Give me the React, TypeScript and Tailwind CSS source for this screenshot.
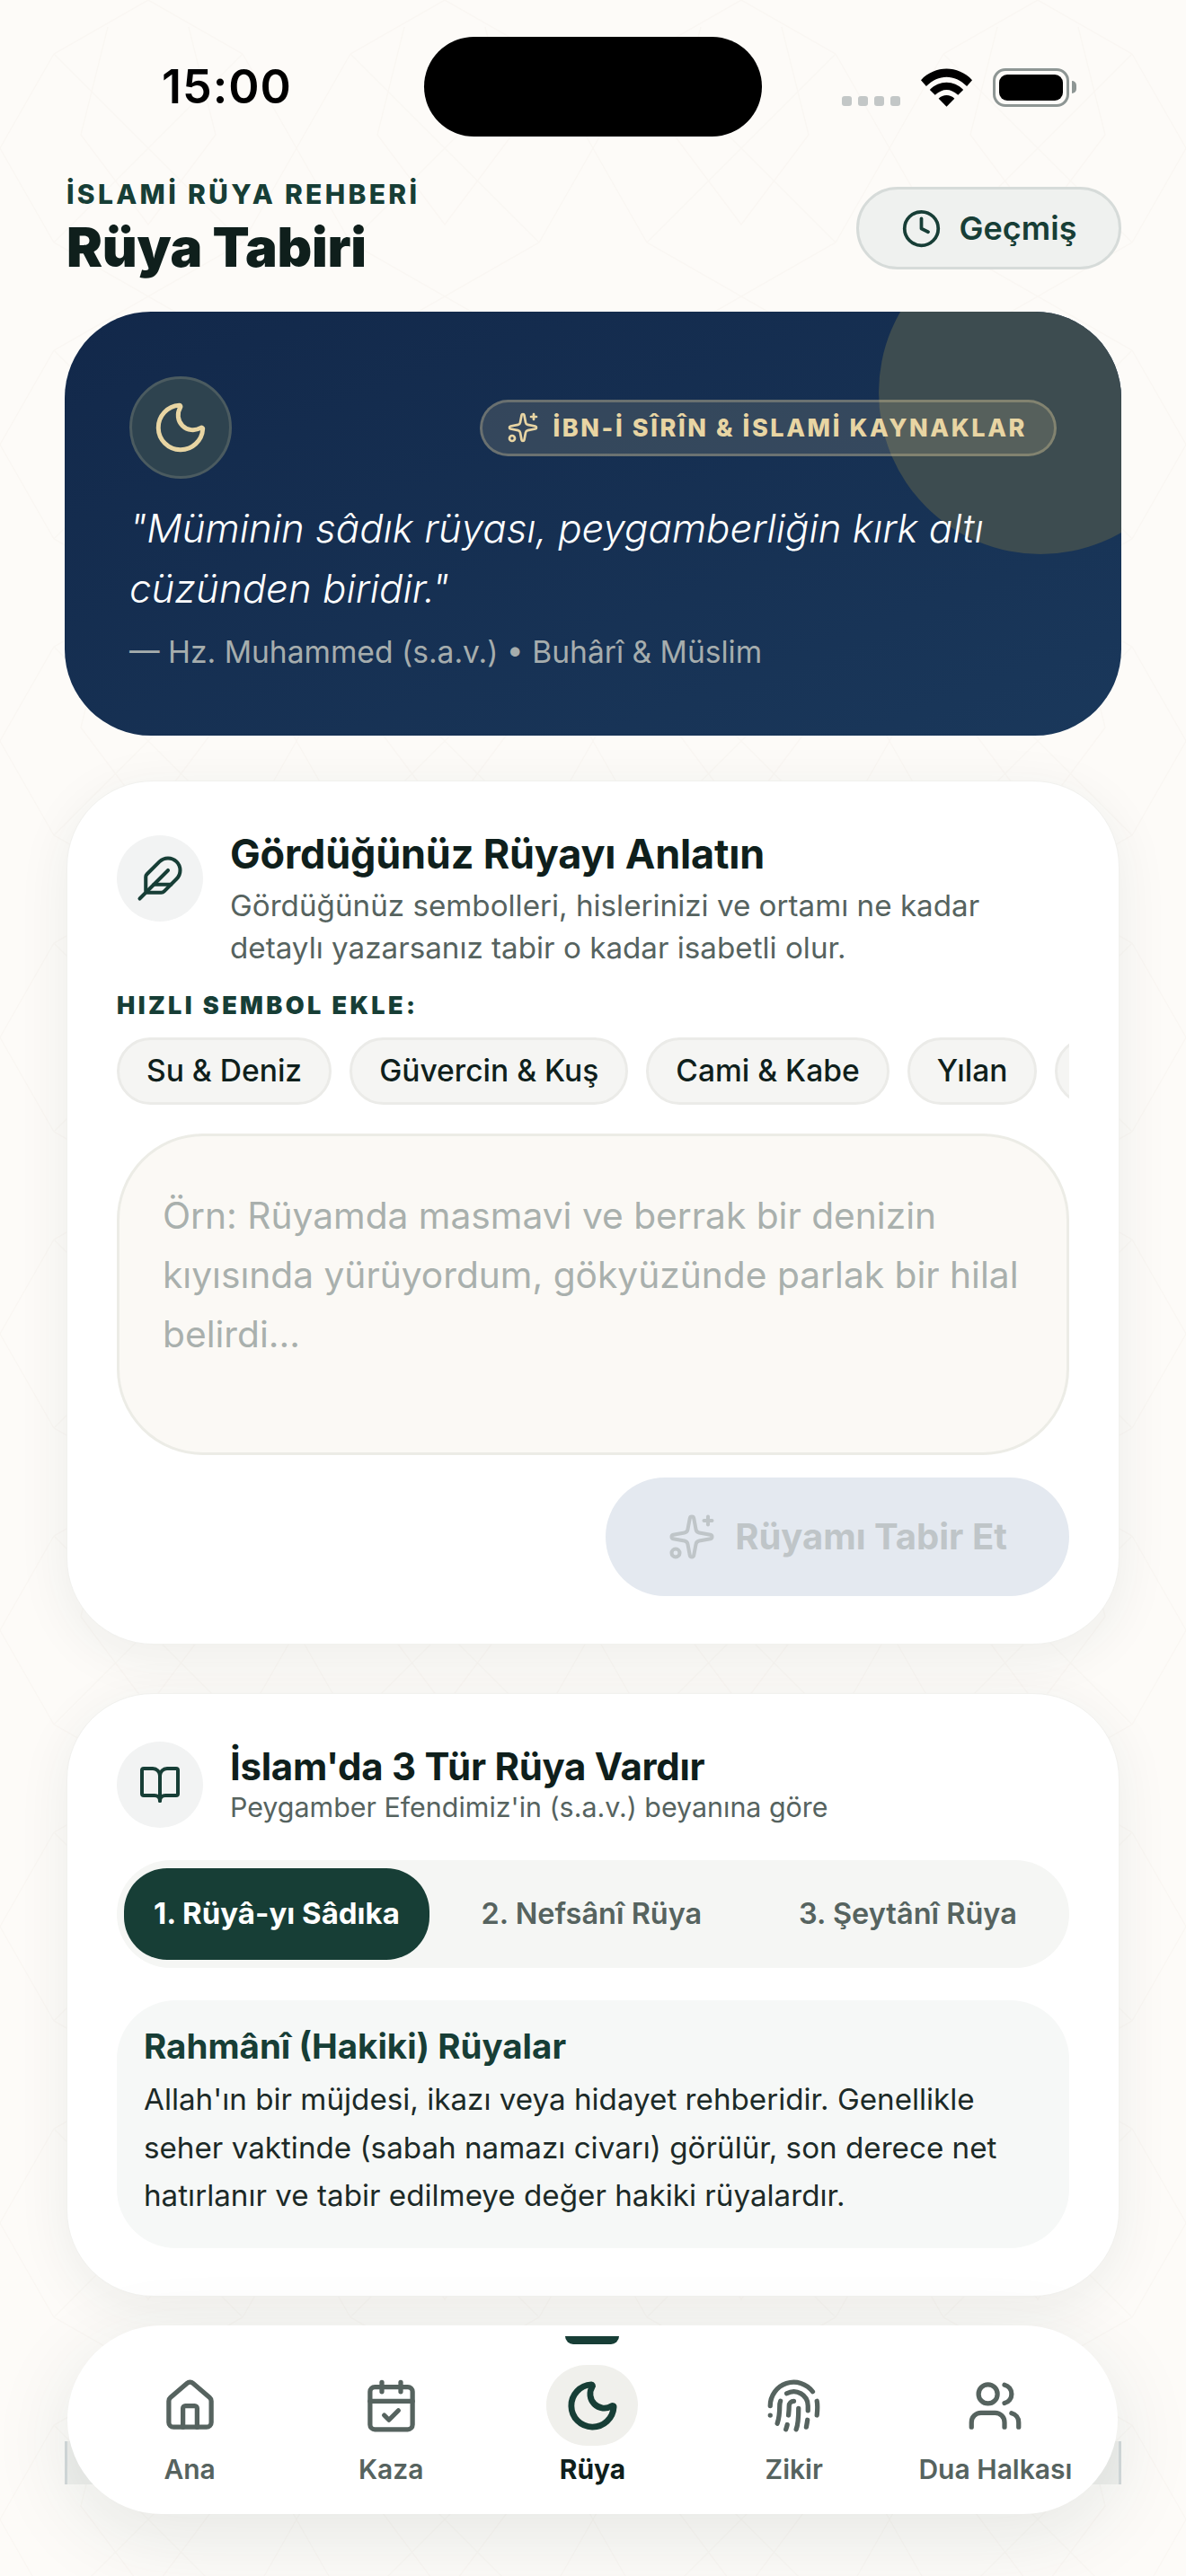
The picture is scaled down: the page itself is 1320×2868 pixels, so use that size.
import { BookOpen, CalendarCheck, Clock, Feather, Fingerprint, House, Moon, Sparkles, Users } from 'lucide-react'

const sans = "font-['Inter','Liberation_Sans',sans-serif]"

const chips = ['Su & Deniz', 'Güvercin & Kuş', 'Cami & Kabe', 'Yılan', 'Ay & Güneş']

const navItems = [
  { label: 'Ana', icon: House },
  { label: 'Kaza', icon: CalendarCheck },
  { label: 'Rüya', icon: Moon, active: true },
  { label: 'Zikir', icon: Fingerprint },
  { label: 'Dua Halkası', icon: Users },
]

function StatusBar() {
  return (
    <div className="relative flex h-[198px] items-center justify-between pb-[4px] pl-[180px] pr-[122px]">
      <span className="text-[52px] leading-none font-semibold tracking-[1px] text-black">15:00</span>
      {/* Dynamic Island */}
      <div className="absolute left-[472px] top-[41px] h-[111px] w-[376px] rounded-full bg-black" />
      <div className="flex items-end gap-[23px]">
        <div className="mb-[1px] flex gap-[7px]">
          <span className="h-[11px] w-[11px] rounded-[3px] bg-[#c3c7c7]" />
          <span className="h-[11px] w-[11px] rounded-[3px] bg-[#c3c7c7]" />
          <span className="h-[11px] w-[11px] rounded-[3px] bg-[#c3c7c7]" />
          <span className="h-[11px] w-[11px] rounded-[3px] bg-[#c3c7c7]" />
        </div>
        <svg width="57" height="43" viewBox="0 0 58 43">
          <path d="M0 13 C16 -4 42 -4 58 13 L52 20 C38 6 20 6 6 20 Z" fill="#000" />
          <path d="M10 24 C21 13 37 13 48 24 L42 30 C33 22 25 22 16 30 Z" fill="#000" />
          <path d="M20 34 C25 29 33 29 38 34 L29 43 Z" fill="#000" />
        </svg>
        <div className="flex items-center">
          <div className="flex h-[43px] w-[85px] items-center justify-center rounded-[14px] border-[3px] border-[#8e9694]">
            <div className="h-[29px] w-[71px] rounded-[9px] bg-black" />
          </div>
          <span className="ml-[3px] h-[14px] w-[5px] rounded-r-full bg-[#8e9694]" />
        </div>
      </div>
    </div>
  )
}

function HeroCard() {
  return (
    <div className="relative mx-[72px] mt-[36px] h-[472px] overflow-hidden rounded-[96px] bg-gradient-to-br from-[#12284a] to-[#1a385b] px-[72px] pt-[72px]">
      <div className="absolute -right-[90px] -top-[90px] h-[360px] w-[360px] rounded-full bg-[#3d4c50]" />
      <div className="relative flex items-center justify-between">
        <div className="flex h-[114px] w-[114px] items-center justify-center rounded-full border-[3px] border-[#4b5b60] bg-[#2e434f]">
          <Moon size={66} strokeWidth={1.8} className="text-[#e8d5a3]" />
        </div>
        <div className="flex h-[63px] items-center gap-[15px] rounded-full border-[3px] border-[#e8d5a3]/30 bg-[#e8d5a3]/15 pl-[27px] pr-[30px]">
          <Sparkles size={36} strokeWidth={1.8} className="text-[#e8d5a3]" />
          <span className="text-[27px] leading-none font-extrabold tracking-[2.6px] text-[#e8d5a3]">İBN-İ SÎRÎN & İSLAMİ KAYNAKLAR</span>
        </div>
      </div>
      <p className="relative mt-[22px] text-[43.8px] leading-[67px] font-light text-white italic">
        "Müminin sâdık rüyası, peygamberliğin kırk altı cüzünden biridir."
      </p>
      <p className="relative mt-[13px] text-[33.6px] leading-[48px] text-[#a6adad]">— Hz. Muhammed (s.a.v.) • Buhârî & Müslim</p>
    </div>
  )
}

function Card({ className, children }: { className: string; children: React.ReactNode }) {
  return (
    <div className={`mx-[74px] rounded-[96px] border-[1px] border-[#f1f1ee] bg-white px-[55px] shadow-[0_12px_60px_rgba(23,62,54,0.07)] ${className}`}>
      {children}
    </div>
  )
}

function IconCircle({ children }: { children: React.ReactNode }) {
  return <div className="flex h-[96px] w-[96px] shrink-0 items-center justify-center rounded-full bg-[#f2f3f3] text-[#173e36]">{children}</div>
}

function DreamForm() {
  return (
    <Card className="mt-[50px] h-[962px] pt-[60px]">
      <div className="flex gap-[30px]">
        <IconCircle>
          <Feather size={54} strokeWidth={1.8} />
        </IconCircle>
        <div>
          <h2 className="text-[45px] leading-[42px] font-bold tracking-[-0.2px] text-[#0f1f1c]">Gördüğünüz Rüyayı Anlatın</h2>
          <p className="mt-[13px] text-[33.2px] leading-[47px] text-[#56635f]">
            Gördüğünüz sembolleri, hislerinizi ve ortamı ne kadar detaylı yazarsanız tabir o kadar isabetli olur.
          </p>
        </div>
      </div>
      <div className="mt-[25px] text-[27px] leading-[32px] font-black tracking-[3.4px] text-[#173e36]">HIZLI SEMBOL EKLE:</div>
      <div className="mt-[19px] flex gap-[20px] overflow-hidden">
        {chips.map((chip) => (
          <span key={chip} className="flex h-[75px] shrink-0 items-center rounded-full border-[3px] border-[#ebebe8] bg-[#f5f5f3] px-[30px] text-[33.6px] font-medium text-[#0f1f1c]">
            {chip}
          </span>
        ))}
      </div>
      <div className="mt-[32px] h-[358px] rounded-[96px] border-[3px] border-[#ecece6] bg-[#fbf9f5] pl-[48px] pr-[32px] pt-[56px] text-[40.7px] leading-[66px] text-[#a9b0ad]">
        Örn: Rüyamda masmavi ve berrak bir denizin kıyısında yürüyordum, gökyüzünde parlak bir hilal belirdi...
      </div>
      <div className="mt-[25px] flex justify-end">
        <button className="flex h-[132px] w-[516px] items-center justify-center gap-[21px] rounded-full bg-[#e4e9f0] text-[40px] font-bold text-[#bfc5c8]">
          <Sparkles size={54} strokeWidth={1.8} />
          Rüyamı Tabir Et
        </button>
      </div>
    </Card>
  )
}

function DreamTypes() {
  return (
    <Card className="mt-[54px] h-[672px] pt-[53px]">
      <div className="flex gap-[30px]">
        <IconCircle>
          <BookOpen size={48} strokeWidth={2} />
        </IconCircle>
        <div>
          <h2 className="text-[42px] leading-[55px] font-bold tracking-[-0.3px] text-[#0f1f1c]">İslam'da 3 Tür Rüya Vardır</h2>
          <p className="text-[30.4px] leading-[36px] text-[#56635f]">Peygamber Efendimiz'in (s.a.v.) beyanına göre</p>
        </div>
      </div>
      <div className="mt-[36px] flex h-[120px] items-center gap-[9px] rounded-[60px] bg-[#f5f6f4] px-[8px]">
        <div className="flex h-[102px] items-center rounded-[48px] bg-[#173e36] px-[33px] text-[33px] font-bold text-white">1. Rüyâ-yı Sâdıka</div>
        <div className="flex-1 text-center text-[32.5px] font-semibold text-[#56635f]">2. Nefsânî Rüya</div>
        <div className="flex-1 text-center text-[32.5px] font-semibold text-[#56635f]">3. Şeytânî Rüya</div>
      </div>
      <div className="mt-[36px] h-[276px] rounded-[66px] bg-[#f6f8f7] px-[30px] pt-[26px]">
        <h3 className="text-[38.5px] leading-[50px] font-bold text-[#173e36]">Rahmânî (Hakiki) Rüyalar</h3>
        <p className="mt-[8px] text-[33.2px] leading-[53.5px] text-[#1c2a27]">
          Allah'ın bir müjdesi, ikazı veya hidayet rehberidir. Genellikle seher vaktinde (sabah namazı civarı) görülür, son derece net hatırlanır ve tabir edilmeye değer hakiki rüyalardır.
        </p>
      </div>
    </Card>
  )
}

function BottomNav() {
  return (
    <>
      {/* strip that peeks out behind the floating bar */}
      <div className="absolute left-[72px] top-[2718px] h-[48px] w-[1176px] border-x-[3px] border-[#d5dadb] bg-[#f0f0ed]" />
      <nav className="absolute bottom-[69px] left-[75px] grid h-[210px] w-[1169px] grid-cols-5 rounded-[105px] bg-white px-[24px] shadow-[0_24px_90px_rgba(23,62,54,0.1)]">
        {navItems.map((item) => {
          const Icon = item.icon
          return (
            <div key={item.label} className="relative flex flex-col items-center pt-[44px]">
              {item.active && <span className="absolute top-[12px] h-[9px] w-[60px] rounded-b-full bg-[#173e36]" />}
              <div className={`flex h-[90px] w-[102px] items-center justify-center rounded-full ${item.active ? 'bg-[#f0f0ec] text-[#173e36]' : 'text-[#56635f]'}`}>
                <Icon size={63} strokeWidth={item.active ? 2.6 : 2} />
              </div>
              <span className={`mt-[6px] text-[30px] leading-[40px] whitespace-nowrap ${item.active ? 'font-bold text-[#0f1f1c]' : 'font-semibold text-[#56635f]'}`}>
                {item.label}
              </span>
            </div>
          )
        })}
      </nav>
    </>
  )
}

// very faint geometric pattern on the page background
function BackgroundPattern() {
  return (
    <svg width="1320" height="2868" className="absolute inset-0 -z-10">
      <defs>
        <pattern id="tile" width="330" height="330" patternUnits="userSpaceOnUse">
          <path
            d="M0 165 L60 60 L165 0 L270 60 L330 165 L270 270 L165 330 L60 270 Z M60 60 L165 165 L270 60 M60 270 L165 165 L270 270 M120 30 L90 150 L165 250 L240 150 L210 30"
            fill="none"
            stroke="#faf7f3"
            strokeWidth="1.5"
          />
        </pattern>
      </defs>
      <rect width="1320" height="2868" fill="url(#tile)" />
    </svg>
  )
}

export default function App() {
  return (
    <div className={`relative isolate h-[2868px] w-[1320px] overflow-hidden bg-[#fdfbf8] ${sans}`}>
      <BackgroundPattern />
      <StatusBar />
      <header className="flex items-start justify-between pl-[74px] pr-[72px]">
        <div>
          <div className="text-[30px] leading-[36px] font-extrabold tracking-[3.3px] text-[#173e36]">İSLAMİ RÜYA REHBERİ</div>
          <h1 className="mt-[5px] text-[60px] leading-[72px] font-black tracking-[-0.3px] text-[#0f1f1c]">Rüya Tabiri</h1>
        </div>
        <button className="mt-[10px] flex h-[92px] w-[295px] items-center justify-center gap-[20px] rounded-full border-[3px] border-[#d6dbd9] bg-[#eff1ef] text-[36px] font-semibold text-[#173e36]">
          <Clock size={45} strokeWidth={2} />
          Geçmiş
        </button>
      </header>
      <HeroCard />
      <DreamForm />
      <DreamTypes />
      <BottomNav />
    </div>
  )
}
